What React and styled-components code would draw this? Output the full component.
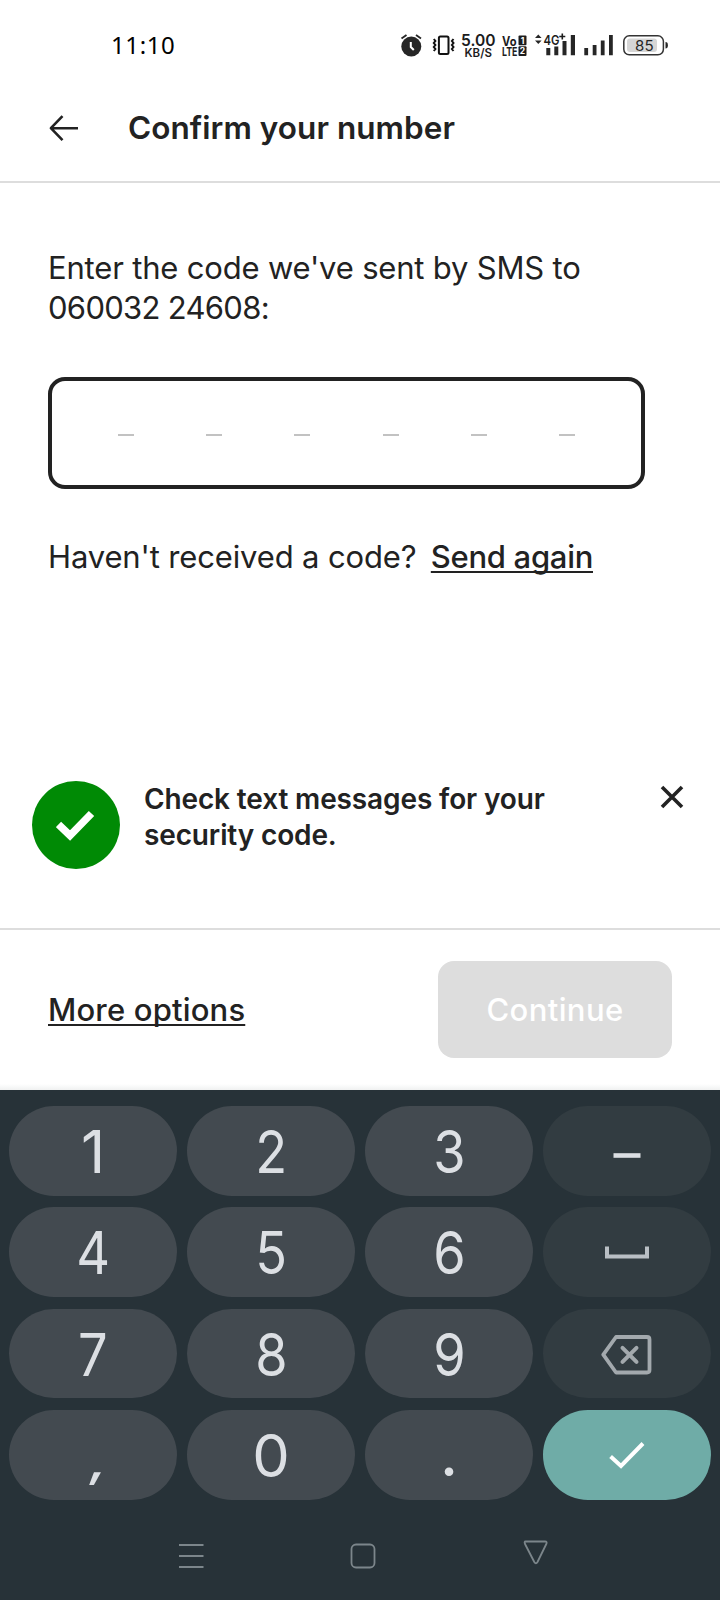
import React from "react";
import styled, { createGlobalStyle } from "styled-components";

const Global = createGlobalStyle`
  *, *::before, *::after { box-sizing: border-box; }
  body { margin: 0; background: #fff; }
  button { font: inherit; border: 0; padding: 0; margin: 0; background: none; color: inherit; }
  svg { display: block; flex: none; }
`;

const Screen = styled.div`
  width: 720px;
  height: 1600px;
  display: flex;
  flex-direction: column;
  background: #fff;
  color: #222;
  font-family: Inter, "Liberation Sans", sans-serif;
  overflow: hidden;
`;

const StatusBar = styled.header`
  height: 72px;
  padding: 27px 50px 0 111px;
  display: flex;
  justify-content: space-between;
`;

const Clock = styled.span`
  height: 36px;
  line-height: 36px;
  font-family: "Noto Sans", sans-serif;
  font-size: 24px;
  letter-spacing: 0.6px;
  color: #000;
`;

const AppBar = styled.div`
  height: 111px;
  padding: 2px 0 0 48px;
  display: flex;
  align-items: center;
  border-bottom: 2px solid #ddd;
`;

const Title = styled.h1`
  margin: 0 0 0 48px;
  font-size: 31.5px;
  line-height: 40px;
  font-weight: 600;
  letter-spacing: 0.05px;
  white-space: nowrap;
`;

const Content = styled.main`
  height: 582px;
  padding: 65px 48px 0;
`;

const Line = styled.span`
  display: block;
  font-size: 31px;
  line-height: 40px;
  letter-spacing: ${(p) => p.$track || 0}px;
  white-space: nowrap;
`;

const Prompt = styled.p`
  margin: 0;
`;

const CodeField = styled.div`
  width: 597px;
  height: 112px;
  margin-top: 49px;
  padding: 3px 66px 0;
  border: 4px solid #222;
  border-radius: 17px;
  display: flex;
  align-items: center;
  justify-content: space-between;
`;

const Slot = styled.span`
  width: 16px;
  height: 2px;
  background: #c2c2c2;
`;

const Resend = styled.div`
  margin-top: 48px;
  display: flex;
  align-items: baseline;
  justify-content: space-between;
  width: 545px;
`;

const Link = styled.a`
  font-size: 31px;
  line-height: 40px;
  font-weight: 500;
  letter-spacing: ${(p) => p.$track || 0}px;
  text-decoration: underline;
  text-decoration-thickness: 2px;
  text-decoration-skip-ink: none;
  text-underline-offset: 3px;
  white-space: nowrap;
`;

const Notice = styled.section`
  height: 165px;
  padding: 16px 36px 0 32px;
  display: flex;
  align-items: flex-start;
  border-bottom: 2px solid #ddd;
`;

const Badge = styled.span`
  width: 88px;
  height: 88px;
  border-radius: 50%;
  background: #008a05;
  display: flex;
  align-items: center;
  justify-content: center;
`;

const Message = styled.div`
  flex: 1;
  margin-left: 24px;
`;

const MessageLine = styled.span`
  display: block;
  font-size: 28px;
  line-height: 36px;
  font-weight: 600;
  letter-spacing: -0.13px;
  white-space: nowrap;
`;

const Close = styled.button`
  margin-top: 4px;
`;

const Actions = styled.footer`
  height: 160px;
  padding: 0 48px 1px;
  display: flex;
  align-items: center;
  justify-content: space-between;
  background: linear-gradient(#fff 154px, #f0f1f1 160px);
`;

const Continue = styled.button`
  width: 234px;
  height: 97px;
  border-radius: 16px;
  background: #ddd;
  color: #fff;
  font-size: 31px;
  line-height: 40px;
  font-weight: 500;
  letter-spacing: 0.4px;
`;

const Keyboard = styled.div`
  flex: 1;
  background: #273238;
  padding: 16px 9px 0;
`;

const Keys = styled.div`
  display: grid;
  grid-template-columns: repeat(4, 168px);
  grid-auto-rows: 89.5px;
  gap: 11.9px 10px;
`;

const tones = { digit: "#434a50", side: "#323c41", enter: "#6faca7" };

const Key = styled.button`
  border-radius: 45px;
  background: ${(p) => tones[p.$tone]};
  color: #dcdfe3;
  display: flex;
  align-items: center;
  justify-content: center;
  font-size: 59.5px;
  line-height: 88px;
`;

const shapes = {
  narrow: "scaleX(0.88)",
  wide: "none",
  comma: "translate(6px, 5px) skewX(-10deg) scale(1, 0.75)",
  dot: "translateY(-1px)",
};

const Glyph = styled.span`
  display: block;
  transform: ${(p) => shapes[p.$shape]};
  font-weight: ${(p) => (p.$shape === "comma" || p.$shape === "dot" ? 500 : 400)};
`;

const NavBar = styled.nav`
  height: 60px;
  margin: 28px 155px 0 161px;
  display: flex;
  justify-content: space-between;
`;

const StatusIcons = () => (
  <svg width="272" height="36" viewBox="398 27 272 36" fill="#262626">
    <circle cx="411.3" cy="46.5" r="10" />
    <path d="M401.5 38.5l5-3.6M421 38.5l-5-3.6" stroke="#262626" strokeWidth="1.8" />
    <path d="M410.8 42v5l3 3" stroke="#fff" strokeWidth="2" fill="none" />
    <rect x="438.9" y="36.6" width="9.6" height="17.4" rx="1.5" fill="none" stroke="#111" strokeWidth="2" />
    <path d="M433.8 39l1.6 2-1.6 2 1.6 2-1.6 2 1.6 2-1.6 2M453.5 39l-1.6 2 1.6 2-1.6 2 1.6 2-1.6 2 1.6 2" fill="none" stroke="#111" strokeWidth="2" />
    <g fontFamily="Inter, sans-serif" fill="#1c1c1c">
      <text x="461" y="46" fontSize="16" fontWeight="600" textLength="34.5" lengthAdjust="spacingAndGlyphs">5.00</text>
      <text x="464.5" y="57.3" fontSize="12" fontWeight="600" textLength="27.5" lengthAdjust="spacingAndGlyphs">KB/S</text>
      <text x="502" y="45.5" fontSize="12.5" fontWeight="700" textLength="14.5" lengthAdjust="spacingAndGlyphs">Vo</text>
      <text x="502" y="55.8" fontSize="12" fontWeight="700" textLength="15.5" lengthAdjust="spacingAndGlyphs">LTE</text>
      <rect x="518.5" y="35.5" width="8" height="9.8" rx="1" />
      <rect x="518.5" y="46.3" width="8" height="9.6" rx="1" />
      <text x="522.5" y="43.6" fontSize="8.5" fontWeight="700" fill="#fff" textAnchor="middle">1</text>
      <text x="522.5" y="54.3" fontSize="8.5" fontWeight="700" fill="#fff" textAnchor="middle">2</text>
      <text x="543.5" y="44.5" fontSize="13.5" fontWeight="600" textLength="16" lengthAdjust="spacingAndGlyphs">4G</text>
    </g>
    <path d="M562.3 33.5v6M559.3 36.5h6" stroke="#1c1c1c" strokeWidth="1.6" />
    <path d="M535 38l3.3-3.5 3.3 3.5zM535 40.5l3.3 3.5 3.3-3.5z" />
    <path d="M546.3 48h4v7.3h-4zM554.3 46.5h4v8.8h-4zM562.5 41h4v14.3h-4zM570.8 35h4.2v20.3h-4.2z" />
    <path d="M584.3 48h3.8v7.3h-3.8zM592.7 45h3.8v10.3h-3.8zM600.8 40.5h3.8v14.8h-3.8zM609 35h3.8v20.3H609z" />
    <rect x="627" y="38.5" width="30" height="13.5" rx="3" fill="#d6d6d6" />
    <rect x="623.8" y="35.8" width="39.6" height="19" rx="5.5" fill="none" stroke="#333" strokeWidth="1.5" />
    <path d="M665.5 42q2.4 0 2.4 3.3t-2.4 3.3z" />
    <text x="644.3" y="50.5" fontFamily="Inter, sans-serif" fontSize="14" textAnchor="middle" textLength="18.5" lengthAdjust="spacingAndGlyphs">85</text>
  </svg>
);

const BackIcon = () => (
  <svg width="32" height="32" viewBox="0 0 32 32" fill="none" stroke="#222" strokeWidth="2.6">
    <path d="M14.5 4.2L2.9 16.2L14.5 28.2M2.9 16.2H30" strokeLinejoin="round" />
  </svg>
);

const SpaceIcon = () => (
  <svg width="44" height="14" viewBox="0 0 44 14" fill="none" stroke="#b9bfc4" strokeWidth="4">
    <path d="M2 1.5V11.5H42V1.5" />
  </svg>
);

const DashIcon = () => (
  <svg width="28" height="14" viewBox="0 0 28 14">
    <path d="M.5 11.5h27" stroke="#dcdfe3" strokeWidth="4.6" />
  </svg>
);

const DeleteIcon = () => (
  <svg width="52" height="42" viewBox="0 0 52 42" fill="none" stroke="#a3a9ad" strokeWidth="3.8" strokeLinejoin="round" strokeLinecap="round">
    <path d="M15 4H46Q48.5 4 48.5 6.5V37Q48.5 39.5 46 39.5H15L2.3 21.7Z" />
    <path d="M21.5 14.8l14 14M35.5 14.8l-14 14" strokeWidth="4" />
  </svg>
);

const EnterIcon = () => (
  <svg width="36" height="28" viewBox="0 0 36 28" fill="none" stroke="#fff" strokeWidth="4">
    <path d="M1.6 15.5L12 25L34 2.5" />
  </svg>
);

const digit = (label, shape = "narrow") => <Glyph $shape={shape}>{label}</Glyph>;

const keys = [
  [digit("1", "wide")], [digit("2")], [digit("3")], [<DashIcon />, "side"],
  [digit("4")], [digit("5")], [digit("6")], [<SpaceIcon />, "side"],
  [digit("7")], [digit("8")], [digit("9")], [<DeleteIcon />, "side"],
  [digit(",", "comma")], [digit("0", "wide")], [digit(".", "dot")], [<EnterIcon />, "enter"],
];

export default function App() {
  return (
    <Screen>
      <Global />
      <StatusBar>
        <Clock>11:10</Clock>
        <StatusIcons />
      </StatusBar>
      <AppBar>
        <BackIcon />
        <Title>Confirm your number</Title>
      </AppBar>
      <Content>
        <Prompt>
          <Line $track={-0.18}>Enter the code we've sent by SMS to</Line>
          <Line $track={-0.7}>060032 24608:</Line>
        </Prompt>
        <CodeField>
          {[0, 1, 2, 3, 4, 5].map((n) => <Slot key={n} />)}
        </CodeField>
        <Resend>
          <Line $track={-0.14}>Haven't received a code?</Line>
          <Link $track={-0.3}>Send again</Link>
        </Resend>
      </Content>
      <Notice>
        <Badge>
          <svg width="40" height="32" viewBox="0 0 40 32" fill="none" stroke="#fff" strokeWidth="7.5">
            <path d="M2.5 15.5L14 26.5L35.5 4.5" />
          </svg>
        </Badge>
        <Message>
          <MessageLine>Check text messages for your</MessageLine>
          <MessageLine>security code.</MessageLine>
        </Message>
        <Close aria-label="Close">
          <svg width="24" height="24" viewBox="0 0 24 24" stroke="#222" strokeWidth="3.6">
            <path d="M2 2l20 20M22 2L2 22" />
          </svg>
        </Close>
      </Notice>
      <Actions>
        <Link $track={0.17}>More options</Link>
        <Continue>Continue</Continue>
      </Actions>
      <Keyboard>
        <Keys>
          {keys.map(([label, tone = "digit"], i) => <Key key={i} $tone={tone}>{label}</Key>)}
        </Keys>
        <NavBar>
          <svg width="40" height="60" viewBox="0 0 40 60" stroke="#7c868b" strokeWidth="1.8">
            <path d="M9 17h24.5M9 28h24.5M9 39h24.5" />
          </svg>
          <svg width="40" height="60" viewBox="0 0 40 60" fill="none" stroke="#7c868b" strokeWidth="1.8">
            <rect x="8.5" y="16.5" width="23" height="23" rx="4.5" />
          </svg>
          <svg width="40" height="60" viewBox="0 0 40 60" fill="none" stroke="#7c868b" strokeWidth="1.8" strokeLinejoin="round">
            <path d="M9.500 13.500H29Q31.500 13.500 30.300 16L21.500 34Q19.900 36.500 18.300 34L9 16Q8 13.500 9.500 13.500Z" />
          </svg>
        </NavBar>
      </Keyboard>
    </Screen>
  );
}
